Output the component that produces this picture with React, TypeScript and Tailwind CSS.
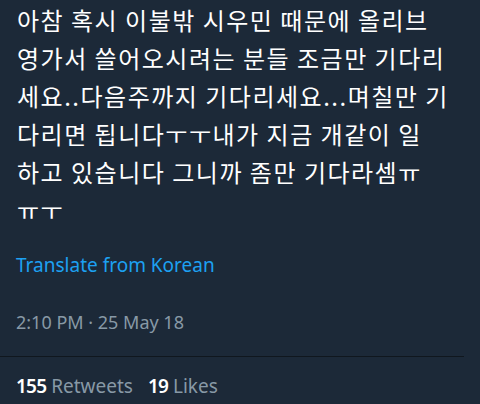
import React from "react";

const lines = [
  "아참 혹시 이불밖 시우민 때문에 올리브",
  "영가서 쓸어오시려는 분들 조금만 기다리",
  "세요..다음주까지 기다리세요...며칠만 기",
  "다리면 됩니다ㅜㅜ내가 지금 개같이 일",
  "하고 있습니다 그니까 좀만 기다라셈ㅠ",
  "ㅠㅜ",
];

export default function App() {
  return (
    <div className="w-[480px] h-[404px] overflow-hidden bg-[#1c2938]">
      {/* Tweet body */}
      <div className="pl-[17px] pt-[1px] text-[24px] leading-[38px] tracking-[1.5px] text-white font-['Noto_Sans_CJK_KR','Noto_Sans',sans-serif]">
        {lines.map((l, i) => (
          <div key={i} className="whitespace-nowrap">
            {l}
          </div>
        ))}
      </div>

      <div className="font-['Noto_Sans','Liberation_Sans',sans-serif]">
        <div className="pl-[16px] mt-[24px] text-[19px] leading-[24px] text-[#1da1f2]">
          Translate from Korean
        </div>
        <div className="pl-[16px] mt-[33px] text-[18px] leading-[24px] text-[#8899a6]">
          2:10 PM · 25 May 18
        </div>
        <div className="mt-[22px] w-[464px] h-px bg-[#10171e]" />
        <div className="pl-[16px] mt-[17px] flex items-baseline gap-[15px] text-[19px] leading-[24px]">
          <span>
            <span className="text-white font-semibold tracking-[-0.8px]">155</span>{" "}
            <span className="text-[#8899a6]">Retweets</span>
          </span>
          <span>
            <span className="text-white font-semibold tracking-[-0.8px]">19</span>{" "}
            <span className="text-[#8899a6]">Likes</span>
          </span>
        </div>
      </div>
    </div>
  );
}
